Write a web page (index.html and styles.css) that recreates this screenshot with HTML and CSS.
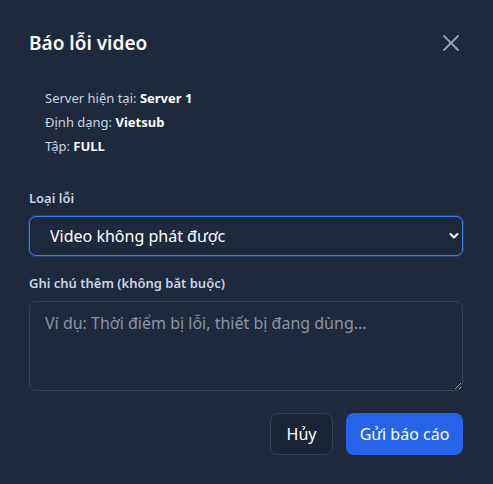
FILE: index.html
```html
<!DOCTYPE html>
<html lang="vi">
<head>
<meta charset="utf-8">
<link rel="stylesheet" href="styles.css">
</head>
<body>
<div class="modal">
  <div class="header">
    <h2 class="title">Báo lỗi video</h2>
    <button class="close" aria-label="Đóng">
      <svg width="18" height="18" viewBox="0 0 18 18"><path d="M2 2L16 16M16 2L2 16" stroke="#94a3b8" stroke-width="1.8" stroke-linecap="round"/></svg>
    </button>
  </div>
  <div class="info">
    <div>Server hiện tại: <b>Server 1</b></div>
    <div>Định dạng: <b>Vietsub</b></div>
    <div>Tập: <b>FULL</b></div>
  </div>
  <label class="label">Loại lỗi</label>
  <div class="select-wrap">
    <select class="select">
      <option>Video không phát được</option>
    </select>
    <svg class="chevron" width="10" height="8" viewBox="0 0 10 8"><path d="M1.5 2L5 5.5L8.5 2" stroke="#ffffff" stroke-width="2" fill="none" stroke-linecap="round" stroke-linejoin="round"/></svg>
  </div>
  <label class="label label2">Ghi chú thêm (không bắt buộc)</label>
  <textarea class="note" placeholder="Ví dụ: Thời điểm bị lỗi, thiết bị đang dùng..."></textarea>
  <div class="actions">
    <button class="btn btn-cancel">Hủy</button>
    <button class="btn btn-primary">Gửi báo cáo</button>
  </div>
</div>
</body>
</html>
```
FILE: styles.css
```css
html, body {
  margin: 0;
  padding: 0;
  background: #1e293b;
  height: 100%;
}
body {
  font-family: "Noto Sans", "Open Sans", sans-serif;
  color: #f1f5f9;
}
.modal {
  padding: 26px 30px 0 29px;
  display: flex;
  flex-direction: column;
}
.header {
  display: flex;
  align-items: center;
  justify-content: space-between;
  height: 34px;
}
.title {
  margin: 0;
  font-size: 19px;
  font-weight: 600;
  color: #f8fafc;
}
.close {
  background: none;
  border: 0;
  padding: 0;
  width: 18px;
  height: 18px;
  margin-right: 3px;
  display: flex;
}
.info {
  margin-top: 26px;
  padding-left: 16px;
  font-size: 13px;
  line-height: 24px;
  color: #cbd5e1;
}
.info b {
  color: #ffffff;
  font-weight: 700;
}
.label {
  margin-top: 31px;
  font-size: 13px;
  font-weight: 600;
  color: #cbd5e1;
  line-height: 18px;
}
.label2 {
  margin-top: 18px;
}
.select-wrap {
  position: relative;
  margin-top: 9px;
}
.select {
  width: 100%;
  height: 40px;
  appearance: none;
  -webkit-appearance: none;
  background: #1e293b;
  border: 1px solid #3b82f6;
  border-radius: 7px;
  color: #ffffff;
  font-family: inherit;
  font-size: 16px;
  padding: 0 20px;
  box-shadow: 0 0 0 1px rgba(59,130,246,0.25);
}
.chevron {
  position: absolute;
  right: 4px;
  top: 16px;
  pointer-events: none;
}
.note {
  margin-top: 9px;
  height: 90px;
  box-sizing: border-box;
  background: #1e293b;
  border: 1px solid #334155;
  border-radius: 7px;
  color: #ffffff;
  font-family: inherit;
  font-size: 16px;
  padding: 10px 15px;
  resize: vertical;
}
.note::placeholder {
  color: #8b95a5;
}
.actions {
  margin-top: 22px;
  display: flex;
  justify-content: flex-end;
  gap: 13px;
}
.btn {
  height: 42px;
  border-radius: 8px;
  font-family: inherit;
  font-size: 16px;
  color: #ffffff;
  padding: 0;
  white-space: nowrap;
}
.btn-cancel {
  background: #1b2434;
  border: 1px solid #334155;
  width: 63px;
}
.btn-primary {
  background: #2563eb;
  border: 0;
  width: 117px;
}
```
